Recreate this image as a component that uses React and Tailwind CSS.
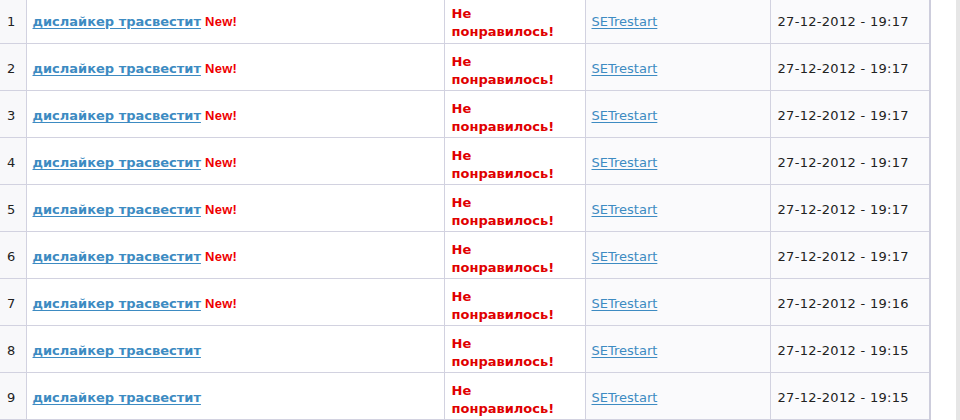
import React from 'react';

const rows = [
  { n: 1, isNew: true, time: '19:17' },
  { n: 2, isNew: true, time: '19:17' },
  { n: 3, isNew: true, time: '19:17' },
  { n: 4, isNew: true, time: '19:17' },
  { n: 5, isNew: true, time: '19:17' },
  { n: 6, isNew: true, time: '19:17' },
  { n: 7, isNew: true, time: '19:16' },
  { n: 8, isNew: false, time: '19:15' },
  { n: 9, isNew: false, time: '19:15' },
];

const App = () => {
  return (
    <div className="w-[960px] h-[420px] overflow-hidden bg-white flex font-['DejaVu_Sans',Verdana,sans-serif] text-[13px] text-[#222]">
      <div className="w-[931px] -mt-[4px] border-r-2 border-[#cdcddc]">
        <table className="w-[929px] table-fixed border-collapse">
          <colgroup>
            <col className="w-[26px]" />
            <col className="w-[418px]" />
            <col className="w-[141px]" />
            <col className="w-[185px]" />
            <col className="w-[159px]" />
          </colgroup>
          <tbody>
            {rows.map((r) => (
              <tr key={r.n} className="h-[47px] border-b border-[#d2d2e0]">
                <td className="bg-[#f8f8fa] border-r border-[#d2d2e0] pl-[7px] pt-[5px] align-middle">{r.n}</td>
                <td className="bg-white border-r border-[#d2d2e0] pl-[6px] pt-[5px] align-middle whitespace-nowrap">
                  <a href="#" className="font-bold text-[#3d8bc2] underline underline-offset-2">дислайкер трасвестит</a>
                  {r.isNew && (
                    <span className="ml-[4px] font-['Liberation_Sans',Arial,sans-serif] font-bold text-[13px] text-[#ee0000] tracking-[0.3px]">New!</span>
                  )}
                </td>
                <td className="bg-white border-r border-[#d2d2e0] px-[7px] pt-[8px] align-middle font-bold text-[#e00000] leading-[18px]">
                  Не понравилось!
                </td>
                <td className="bg-[#fafafc] border-r border-[#d2d2e0] pl-[6px] pt-[5px] align-middle">
                  <a href="#" className="text-[#3d8bc2] underline underline-offset-2">SETrestart</a>
                </td>
                <td className="bg-[#fafafc] pl-[7px] pt-[5px] align-middle tracking-[0.3px] whitespace-nowrap">
                  27-12-2012 - {r.time}
                </td>
              </tr>
            ))}
          </tbody>
        </table>
      </div>
      <div className="w-[25px] bg-white" />
      <div className="flex-1 bg-[#e6e6e6]" />
    </div>
  );
};

export default App;
